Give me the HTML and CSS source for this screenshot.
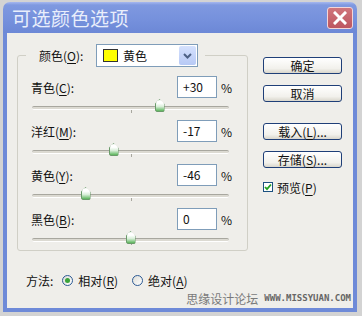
FILE: index.html
```html
<!DOCTYPE html>
<html lang="zh-CN">
<head>
  <meta charset="UTF-8">
  <title>可选颜色选项</title>
  <link rel="stylesheet" href="styles.css">
</head>
<body>
  <div class="window">
    <div class="titlebar">
      <span class="title">可选颜色选项</span>
      <span class="close">
        <svg width="14" height="14" viewBox="0 0 14 14"><path d="M2 2 L12 12 M12 2 L2 12" stroke="#fff" stroke-width="3" stroke-linecap="square"/></svg>
      </span>
    </div>

    <div class="dialog">
      <div class="main">
        <fieldset class="group">
          <legend class="group-head">
            <span class="label">颜色(<u>O</u>):</span>
            <span class="select">
              <span class="swatch"></span>
              <span class="select-text">黄色</span>
              <span class="drop">
                <svg width="9" height="6" viewBox="0 0 9 6"><path d="M1 1 L4.5 4.5 L8 1" fill="none" stroke="#4d6185" stroke-width="2"/></svg>
              </span>
            </span>
          </legend>

          <div class="channel">
            <div class="row">
              <span class="label">青色(<u>C</u>):</span>
              <span class="num">+30</span>
              <span class="pct">%</span>
            </div>
            <div class="slider"><div class="track"><span class="tick"></span><span class="thumb" style="left: calc(50% + 29px)"></span></div></div>
          </div>

          <div class="channel">
            <div class="row">
              <span class="label">洋红(<u>M</u>):</span>
              <span class="num">-17</span>
              <span class="pct">%</span>
            </div>
            <div class="slider"><div class="track"><span class="tick"></span><span class="thumb" style="left: calc(50% - 17px)"></span></div></div>
          </div>

          <div class="channel">
            <div class="row">
              <span class="label">黄色(<u>Y</u>):</span>
              <span class="num">-46</span>
              <span class="pct">%</span>
            </div>
            <div class="slider"><div class="track"><span class="tick"></span><span class="thumb" style="left: calc(50% - 45px)"></span></div></div>
          </div>

          <div class="channel">
            <div class="row">
              <span class="label">黑色(<u>B</u>):</span>
              <span class="num">0</span>
              <span class="pct">%</span>
            </div>
            <div class="slider"><div class="track"><span class="tick"></span><span class="thumb" style="left: calc(50% + 0px)"></span></div></div>
          </div>
        </fieldset>

        <div class="method">
          <span>方法:</span>
          <span class="radio checked"></span>
          <span class="radio-label">相对(<u>R</u>)</span>
          <span class="radio"></span>
          <span class="radio-label">绝对(<u>A</u>)</span>
        </div>
      </div>

      <div class="side">
        <button class="btn">确定</button>
        <button class="btn">取消</button>
        <button class="btn gap">载入(<u>L</u>)...</button>
        <button class="btn">存储(<u>S</u>)...</button>
        <div class="check-row">
          <span class="checkbox">
            <svg width="8" height="8" viewBox="0 0 8 8"><path d="M1 4 L3 6.2 L7 1.5" fill="none" stroke="#21a121" stroke-width="1.8"/></svg>
          </span>
          <span>预览(<u>P</u>)</span>
        </div>
      </div>

      <div class="watermark">
        <span class="wm-cn">思缘设计论坛</span>
        <span class="wm-en">WWW.MISSYUAN.COM</span>
      </div>
    </div>
  </div>
</body>
</html>
```

FILE: styles.css
```css
body {
  margin: 0;
  background-color: #d3d3d3;
  font-family: "Noto Sans CJK SC", sans-serif;
  font-size: 12px;
  color: #111;
}
u {
  text-decoration-thickness: 1px;
  text-underline-offset: 2px;
}
.window {
  width: 354px;
  margin: 2px 0 0 3px;
}
.titlebar {
  height: 31px;
  box-sizing: border-box;
  padding: 0 4px 0 9px;
  display: flex;
  align-items: center;
  justify-content: space-between;
  background: linear-gradient(#a6b8ef 0, #7f99e0 3px, #7590dc 60%, #6c88d6 100%);
  border-radius: 7px 7px 0 0;
}
.title {
  color: #e9eefb;
  font-size: 19px;
  line-height: 22px;
  letter-spacing: 0.5px;
}
.close {
  width: 26px;
  height: 22px;
  box-sizing: border-box;
  display: flex;
  align-items: center;
  justify-content: center;
  background: linear-gradient(#d0767c, #bd5660);
  border: 1px solid #f3d6d8;
  border-radius: 3px;
}
.dialog {
  height: 275px;
  background-color: #efeeea;
  border: 4px solid #6e8ad8;
  border-top: 0;
  display: grid;
  grid-template-columns: 241px 1fr;
  grid-template-rows: 1fr auto;
}
.main {
  padding-top: 11px;
}
.group {
  margin: 0 0 0 10px;
  width: 231px;
  box-sizing: border-box;
  padding: 9px 15px 0 13px;
  border: 1px solid #d0cfc6;
  border-radius: 3px;
}
.group-head {
  display: flex;
  align-items: center;
  margin-left: -5px;
  padding: 0 7px 0 13px;
}
.group-head .label {
  width: 57px;
}
.select {
  width: 102px;
  height: 23px;
  box-sizing: border-box;
  border: 1px solid #7f9db9;
  background: #fff;
  display: flex;
  align-items: center;
  padding-left: 6px;
}
.swatch {
  width: 15px;
  height: 13px;
  box-sizing: border-box;
  background: #ffff00;
  border: 1px solid #333;
}
.select-text {
  margin-left: 5px;
  flex: 1;
}
.drop {
  width: 17px;
  height: 19px;
  margin-right: 1px;
  display: flex;
  align-items: center;
  justify-content: center;
  background: linear-gradient(#d5e1fd, #b7c9f5);
  border-radius: 2px;
}
.channel .row {
  height: 22px;
  display: flex;
  align-items: center;
}
.row .label {
  flex: 1;
}
.num {
  width: 40px;
  height: 22px;
  box-sizing: border-box;
  border: 1px solid #7f9db9;
  background: #fff;
  padding-left: 5px;
  line-height: 20px;
}
.pct {
  width: 15px;
  padding-left: 4px;
  box-sizing: border-box;
}
.slider {
  height: 22px;
  padding: 8px 3px 0 1px;
  box-sizing: border-box;
}
.channel:last-child .slider {
  height: 20px;
}
.track {
  position: relative;
  height: 2px;
  border-top: 1px solid #a8a79f;
  border-bottom: 1px solid #ffffff;
  background: #dcdad2;
  border-radius: 2px;
}
.tick {
  position: absolute;
  left: 50%;
  top: 3px;
  width: 1px;
  height: 3px;
  background: #a8a79f;
}
.thumb {
  position: absolute;
  top: -8px;
  width: 10px;
  height: 13px;
  margin-left: -5px;
  box-sizing: border-box;
  background: linear-gradient(#ffffff 30%, #d8eed8 60%, #5bb55b 100%);
  border: 1px solid #6a9a6a;
  border-radius: 5px 5px 2px 2px;
  clip-path: polygon(50% 0, 100% 38%, 100% 100%, 0 100%, 0 38%);
}
.method {
  margin-top: 21px;
  padding-left: 19px;
  height: 16px;
  display: flex;
  align-items: center;
}
.radio {
  width: 11px;
  height: 11px;
  box-sizing: border-box;
  margin-left: 9px;
  border: 1px solid #2c5a94;
  border-radius: 50%;
  background: linear-gradient(135deg, #dcdcd6, #ffffff);
  display: flex;
  align-items: center;
  justify-content: center;
}
.radio + .radio-label {
  margin-left: 5px;
}
.radio-label + .radio {
  margin-left: 14px;
}
.radio.checked::after {
  content: "";
  width: 5px;
  height: 5px;
  border-radius: 50%;
  background: #3ba33b;
}
.side {
  padding: 24px 0 0 15px;
  display: flex;
  flex-direction: column;
  align-items: flex-start;
}
.btn {
  width: 79px;
  height: 17px;
  margin: 0 0 11px 0;
  padding: 0;
  box-sizing: border-box;
  border: 1px solid #1f3f78;
  border-radius: 3px;
  background: linear-gradient(#ffffff, #f2f1ec 70%, #d9d6cc);
  font-family: "Noto Sans CJK SC", sans-serif;
  font-size: 12px;
  line-height: 15px;
  color: #111;
}
.btn.gap {
  margin-top: 10px;
}
.check-row {
  margin-top: 1px;
  display: flex;
  align-items: center;
  gap: 4px;
  height: 14px;
}
.checkbox {
  width: 10px;
  height: 10px;
  box-sizing: border-box;
  border: 1px solid #1c5180;
  background: #fff;
  display: flex;
  align-items: center;
  justify-content: center;
}
.watermark {
  grid-column: 1 / -1;
  justify-self: end;
  margin: 0 2px 3px 0;
  display: flex;
  align-items: center;
  gap: 6px;
  height: 14px;
}
.wm-cn {
  color: #7a7a7a;
  font-size: 12px;
}
.wm-en {
  color: #666;
  font-family: "DejaVu Sans Mono", monospace;
  font-size: 9px;
  font-weight: bold;
}
```
